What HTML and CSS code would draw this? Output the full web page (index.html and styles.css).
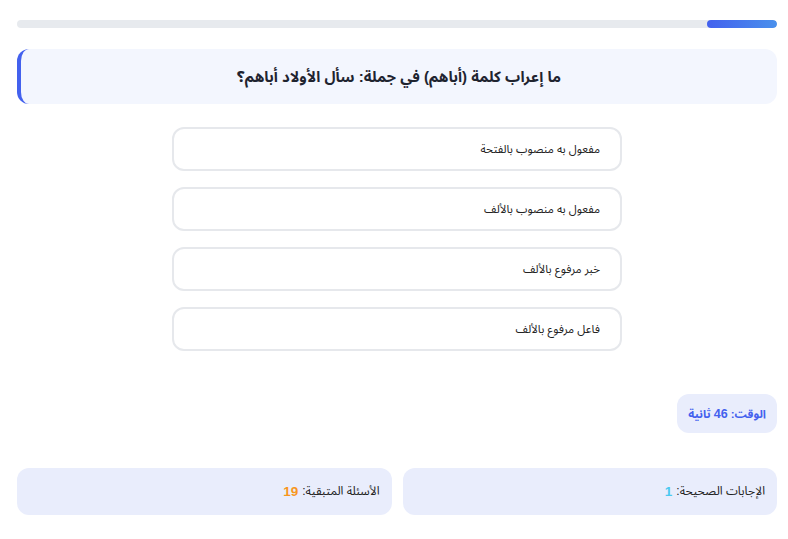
FILE: index.html
```html
<!DOCTYPE html>
<html lang="ar" dir="rtl">
<head>
<meta charset="utf-8">
<title>اختبار</title>
<link rel="stylesheet" href="styles.css">
</head>
<body>
<div class="quiz">
  <div class="progress"><div class="progress-fill" style="width: 9.2%"></div></div>
  <div class="question">ما إعراب كلمة (أباهم) في جملة: سأل الأولاد أباهم؟</div>
  <div class="options">
    <button class="option">مفعول به منصوب بالفتحة</button>
    <button class="option">مفعول به منصوب بالألف</button>
    <button class="option">خبر مرفوع بالألف</button>
    <button class="option">فاعل مرفوع بالألف</button>
  </div>
  <div class="timer-row"><div class="timer">الوقت: <span class="num">46</span> ثانية</div></div>
  <div class="stats">
    <div class="stat">الإجابات الصحيحة: <span class="correct">1</span></div>
    <div class="stat">الأسئلة المتبقية: <span class="remaining">19</span></div>
  </div>
</div>
</body>
</html>
```
FILE: styles.css
```css
html, body {
  margin: 0;
  padding: 0;
  background: #ffffff;
}
body {
  font-family: "Liberation Sans", "Noto Sans Arabic", "DejaVu Sans", sans-serif;
  color: #222;
}
.quiz {
  margin: 0 11px 0 17px;
  padding-top: 20px;
}
.progress {
  height: 8px;
  background: #e7eaee;
  border-radius: 4px;
  overflow: hidden;
  display: flex;
}
.progress-fill {
  height: 100%;
  border-radius: 4px;
  background: linear-gradient(to left, #4a90ec, #4361ee);
}
.question {
  margin-top: 21px;
  height: 55px;
  box-sizing: border-box;
  background: #f3f6fe;
  border-left: 4px solid #4361ee;
  border-radius: 12px;
  display: flex;
  align-items: center;
  justify-content: center;
  font-size: 15px;
  font-weight: bold;
  color: #1f2430;
}
.options {
  width: 450px;
  margin: 23px auto 0;
  display: flex;
  flex-direction: column;
  gap: 16px;
}
.option {
  height: 44px;
  box-sizing: border-box;
  background: #fff;
  border: 2px solid #e6e8ec;
  border-radius: 12px;
  padding: 0 20px;
  text-align: right;
  font-family: inherit;
  font-size: 11.5px;
  color: #222;
  direction: rtl;
}
.timer-row {
  display: flex;
  margin-top: 43px;
}
.timer {
  height: 39px;
  box-sizing: border-box;
  padding: 0 11px;
  background: #e9edfc;
  border-radius: 12px;
  display: flex;
  align-items: center;
  gap: 3px;
  font-size: 11.5px;
  font-weight: bold;
  color: #4361ee;
}
.timer .num {
  font-size: 12.5px;
}
.stats {
  margin-top: 35px;
  display: grid;
  grid-template-columns: 1fr 1fr;
  gap: 11px;
}
.stat {
  height: 47px;
  box-sizing: border-box;
  background: #e9edfc;
  border-radius: 12px;
  padding: 0 12px;
  display: flex;
  align-items: center;
  gap: 4px;
  font-size: 12px;
  color: #222;
}
.correct {
  color: #4cc9f0;
  font-weight: bold;
  font-size: 13.5px;
}
.remaining {
  color: #f8961e;
  font-weight: bold;
  font-size: 13.5px;
}
```
